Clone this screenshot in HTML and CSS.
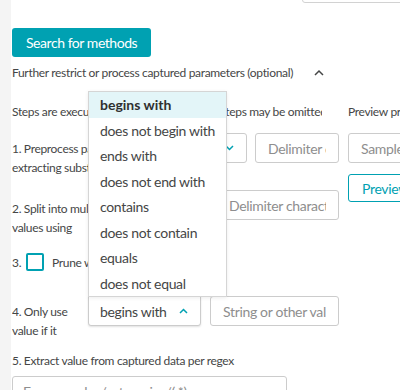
FILE: index.html
```html
<!DOCTYPE html>
<html>
<head>
<meta charset="utf-8">
<title>Capture parameters</title>
<link rel="stylesheet" href="styles.css">
</head>
<body>
<div class="page">
  <div class="rail"></div>
  <main class="main">
    <div class="topbar"><div class="top-field"></div></div>
    <button class="btn-primary">Search for methods</button>
    <div class="section-toggle">
      <span>Further restrict or process captured parameters (optional)</span>
      <svg class="chev chev-dark" width="10" height="7" viewBox="0 0 10 7"><polyline points="1,6 5,2 9,6"/></svg>
    </div>
    <div class="layout">
      <div class="steps">
        <div class="col-head steps-head">Steps are executed in the listed order, and steps may be omitted</div>
        <div class="row row1">
          <div class="label wide">1. Preprocess parameter by<br>extracting substring</div>
          <div class="select sel1"><span>after</span><svg class="chev" width="9" height="6" viewBox="0 0 9 6"><polyline points="1,1 4.5,4.5 8,1"/></svg></div>
          <input class="field f1" placeholder="Delimiter characters">
        </div>
        <div class="row row2">
          <div class="label wide l2">2. Split into multiple<br>values using</div>
          <div class="select sel2"><span>split</span></div>
          <input class="field f2" placeholder="Delimiter characters">
        </div>
        <div class="row row3">
          <span class="num">3.</span>
          <span class="checkbox"></span>
          <span class="check-label">Prune whitespaces</span>
        </div>
        <div class="row row4">
          <div class="label narrow">4. Only use<br>value if it</div>
          <div class="select sel4">
            <span>begins with</span>
            <svg class="chev" width="9" height="6" viewBox="0 0 9 6"><polyline points="1,5 4.5,1.5 8,5"/></svg>
            <ul class="menu">
              <li class="active">begins with</li>
              <li>does not begin with</li>
              <li>ends with</li>
              <li>does not end with</li>
              <li>contains</li>
              <li>does not contain</li>
              <li>equals</li>
              <li>does not equal</li>
            </ul>
          </div>
          <input class="field f4" placeholder="String or other value">
        </div>
        <div class="label5">5. Extract value from captured data per regex</div>
        <input class="field f5" placeholder="For example, /categories/(.*);">
      </div>
      <div class="preview">
        <div class="col-head">Preview processed values</div>
        <input class="field sample" placeholder="Sample value">
        <button class="btn-outline">Preview</button>
      </div>
    </div>
  </main>
</div>
</body>
</html>
```

FILE: styles.css
```css
* { box-sizing: border-box; }
html, body {
  margin: 0;
  padding: 0;
  width: 400px;
  height: 390px;
  overflow: hidden;
  background: #fff;
}
body {
  font-family: Lato, "Liberation Sans", sans-serif;
  font-size: 12px;
  line-height: 19px;
  letter-spacing: -0.33px;
  color: #454646;
}
.page { display: flex; height: 390px; }
.rail { width: 11px; flex: none; background: #f4f4f4; }
.main { flex: 1; min-width: 0; padding-left: 1px; }

.topbar {
  height: 3px;
  overflow: hidden;
  display: flex;
  align-items: flex-end;
  padding-left: 290px;
}
.top-field {
  flex: none;
  width: 120px;
  height: 30px;
  border: 1px solid #d2d2d2;
  border-radius: 3px;
}

.btn-primary {
  display: block;
  margin-top: 25px;
  height: 29px;
  padding: 0 14px;
  border: none;
  border-radius: 3px;
  background: #00a1b2;
  color: #fff;
  font-family: Lato, "Liberation Sans", sans-serif;
  font-size: 14px;
  letter-spacing: -0.45px;
}

.section-toggle {
  margin-top: 5px;
  height: 20px;
  display: flex;
  align-items: center;
  gap: 21px;
}
.chev { fill: none; stroke: #00a1b2; stroke-width: 1.5; flex: none; }
.chev-dark { stroke: #454646; }

.layout { margin-top: 20px; display: flex; gap: 9px; }
.steps { width: 327px; flex: none; }
.preview { width: 120px; flex: none; }
.col-head { height: 19px; white-space: nowrap; overflow: hidden; }
.steps-head { width: 310px; }

.row { display: flex; align-items: flex-start; }
.row1 { margin-top: 12px; }
.row2 { margin-top: 13.5px; }
.row3 { margin-top: 10.5px; height: 30px; align-items: center; }
.row4 { margin-top: 19px; }

.label { flex: none; padding-top: 5.5px; white-space: nowrap; overflow: hidden; }
.label.wide { width: 118px; margin-right: 8px; }
.label.l2 { padding-top: 8.5px; }
.label.narrow { width: 70px; margin-right: 6px; }

.select {
  flex: none;
  height: 30px;
  border: 1px solid #cccccc;
  border-radius: 3px;
  display: flex;
  align-items: center;
  justify-content: space-between;
  padding: 0 12px 0 11px;
  font-size: 14px;
  background: #fff;
}
.sel1 { width: 109px; margin-right: 8px; }
.sel2 { width: 70px; margin-right: 8px; }
.sel4 {
  width: 113px;
  margin-right: 9px;
  position: relative;
  border-radius: 0 0 3px 3px;
  box-shadow: 0 1px 2px rgba(0,0,0,0.12);
}

.field {
  flex: none;
  height: 30px;
  border: 1px solid #cccccc;
  border-radius: 3px;
  padding: 0 12px;
  font-family: Lato, "Liberation Sans", sans-serif;
  font-size: 14px;
  letter-spacing: -0.33px;
  color: #454646;
  background: #fff;
  outline: none;
}
.field::placeholder { color: #8e8e8e; }
.f1 { width: 84px; }
.f2 { width: 123px; }
.f4 { width: 129px; }
.f5 { display: block; width: 275px; margin-top: 6.5px; padding-left: 10px; }
.sample { display: block; width: 100px; margin-top: 12px; }

.num { width: 14px; flex: none; }
.checkbox {
  width: 18px;
  height: 18px;
  flex: none;
  border: 2px solid #00a1b2;
  border-radius: 2px;
  margin-right: 8px;
}
.check-label { white-space: nowrap; }

.label5 { margin-top: 11px; }

.btn-outline {
  display: block;
  margin-top: 11px;
  height: 28px;
  padding: 0 13px;
  border: 1px solid #00a1b2;
  border-radius: 3px;
  background: #fff;
  color: #00a1b2;
  font-family: Lato, "Liberation Sans", sans-serif;
  font-size: 14px;
  letter-spacing: -0.33px;
}

.menu {
  position: absolute;
  left: -1px;
  bottom: 100%;
  width: 139px;
  margin: 0;
  padding: 0;
  list-style: none;
  background: #fff;
  border: 1px solid #d5d5d5;
  box-shadow: 0 1px 4px rgba(0,0,0,0.08);
  font-size: 14px;
  line-height: 25.5px;
  white-space: nowrap;
  z-index: 2;
}
.menu li { padding: 0 11px; }
.menu li.active { background: #e3f5f8; font-weight: 700; color: #2f3030; letter-spacing: 0; }
```
